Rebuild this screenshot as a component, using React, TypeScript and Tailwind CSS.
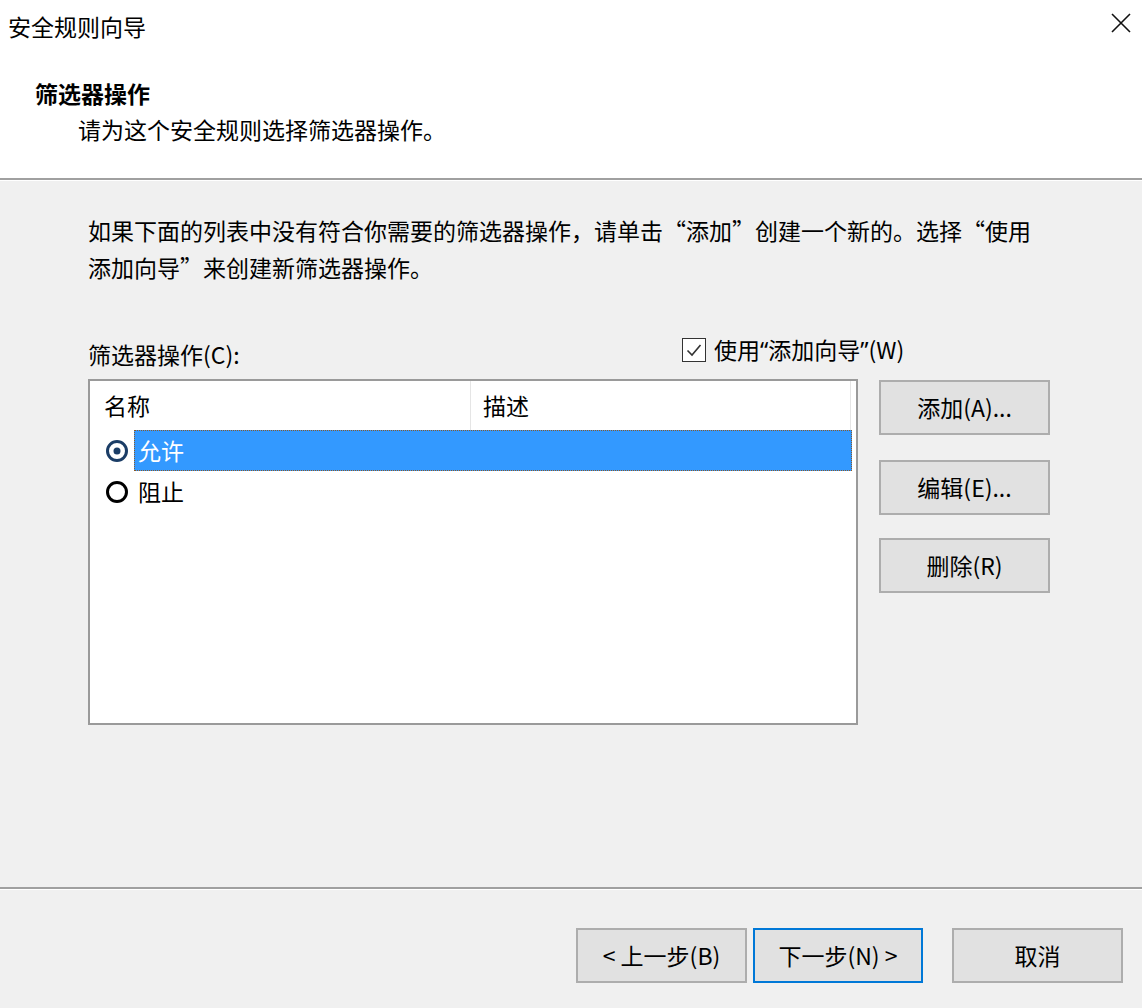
import React from "react";

const FONT = { fontFamily: '"Noto Sans CJK SC", "Microsoft YaHei", sans-serif' };

// Classic Win32 push button
function WinButton({ children, primary = false, className = "" }: { children: React.ReactNode; primary?: boolean; className?: string }) {
  return (
    <button
      className={`h-[55px] bg-[#e1e1e1] flex items-center justify-center text-[23px] leading-none text-black ${
        primary ? "border-2 border-[#0078d7]" : "border-2 border-[#adadad]"
      } ${className}`}
    >
      {children}
    </button>
  );
}

function RadioIcon({ checked }: { checked: boolean }) {
  return (
    <svg width="26" height="26" viewBox="0 0 26 26" className="shrink-0">
      <circle cx="13" cy="13" r="9.5" fill="none" stroke={checked ? "#1b3d66" : "#000"} strokeWidth="3" />
      {checked && <circle cx="13" cy="13" r="3.5" fill="#1b3d66" />}
    </svg>
  );
}

export default function App() {
  return (
    <div className="w-[1142px] h-[1008px] flex flex-col bg-[#f0f0f0] text-black text-[23px]" style={FONT} lang="zh-CN">
      {/* ── header ── */}
      <header className="h-[178px] bg-white shrink-0">
        <div className="flex items-start justify-between">
          <div className="pl-2 pt-[11px] leading-[30px]">安全规则向导</div>
          <button className="mt-[13px] mr-[11px] w-5 h-5">
            <svg width="20" height="20" viewBox="0 0 20 20">
              <path d="M1 1 L19 19 M19 1 L1 19" stroke="#111" strokeWidth="1.6" fill="none" />
            </svg>
          </button>
        </div>
        <div className="pl-[35px] mt-[37px] font-bold leading-[30px]">筛选器操作</div>
        <div className="pl-[78px] mt-[6px] leading-[30px]">请为这个安全规则选择筛选器操作。</div>
      </header>
      <div className="h-[2px] bg-[#a0a0a0] shrink-0" />
      <div className="h-px bg-white shrink-0" />

      {/* ── body ── */}
      <main className="h-[706px] shrink-0 pl-[88px] pt-[31px]">
        <p className="leading-[37px]">
          如果下面的列表中没有符合你需要的筛选器操作，请单击“添加”创建一个新的。选择“使用
          <br />
          添加向导”来创建新筛选器操作。
        </p>

        <div className="mt-[48px] h-[36px] flex items-center">
          <div className="w-[594px] pt-[4px]">筛选器操作(C):</div>
          <label className="flex items-center gap-[8px] -mt-[4px]">
            <span className="w-[24px] h-[24px] border border-[#333] bg-white flex items-center justify-center">
              <svg width="18" height="18" viewBox="0 0 18 18">
                <path d="M2.5 9.5 L7 14 L15.5 4" stroke="#333" strokeWidth="1.6" fill="none" />
              </svg>
            </span>
            <span>
              使用<span className="font-['Noto_Sans']">“</span>添加向导<span className="font-['Noto_Sans']">”</span>(W)
            </span>
          </label>
        </div>

        <div className="mt-[9px] flex gap-[21px]">
          {/* list view */}
          <div className="w-[770px] h-[346px] bg-white border-2 border-[#9a9a9a] flex flex-col">
            <div className="h-[49px] flex shrink-0">
              <div className="w-[381px] border-r border-[#e5e5e5] pl-[14px] flex items-center">名称</div>
              <div className="w-[380px] border-r border-[#e5e5e5] pl-[12px] flex items-center">描述</div>
            </div>
            <div className="h-[41px] flex items-center pl-[14px]">
              <RadioIcon checked />
              <div className="ml-[4px] w-[718px] h-[41px] bg-[#3399ff] border border-dotted border-[#8a5a2a] text-white flex items-center pl-[3px]">
                允许
              </div>
            </div>
            <div className="h-[41px] flex items-center pl-[14px]">
              <RadioIcon checked={false} />
              <div className="ml-[4px] pl-[4px]">阻止</div>
            </div>
          </div>

          {/* side buttons */}
          <div className="w-[171px] flex flex-col pt-px">
            <WinButton>添加(A)...</WinButton>
            <WinButton className="mt-[25px]">编辑(E)...</WinButton>
            <WinButton className="mt-[23px]">删除(R)</WinButton>
          </div>
        </div>
      </main>

      {/* ── footer ── */}
      <div className="h-[2px] bg-[#a0a0a0] shrink-0" />
      <div className="h-px bg-white shrink-0" />
      <footer className="flex pt-[38px] pl-[576px]">
        <WinButton className="w-[171px] h-[54px]">&lt; 上一步(B)</WinButton>
        <WinButton primary className="w-[170px] h-[54px] ml-[6px]">下一步(N) &gt;</WinButton>
        <WinButton className="w-[171px] h-[54px] ml-[29px]">取消</WinButton>
      </footer>
    </div>
  );
}
